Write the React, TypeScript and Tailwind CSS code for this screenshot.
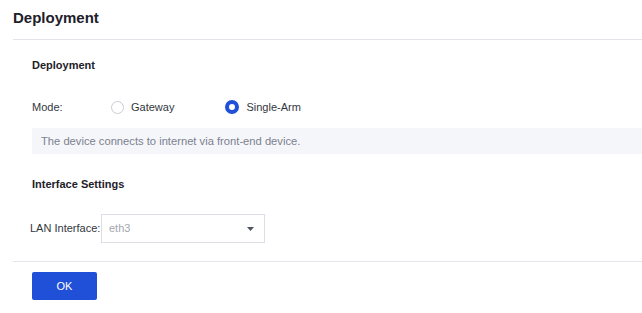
export default function App() {
  return (
    <div className="w-[642px] h-[313px] overflow-hidden bg-white font-['Liberation_Sans',Arial,sans-serif] text-[11px] text-[#333740]">
      <div className="ml-[13px] h-[40px] pb-[4px] border-b border-[#e3e5ea] flex items-center">
        <h1 className="text-[15px] font-bold text-[#1d2129] leading-none">Deployment</h1>
      </div>

      <div className="pl-[32px]">
        <h2 className="mt-[17px] h-[16px] leading-[16px] font-bold text-[#1d2129]">Deployment</h2>

        <div className="mt-[23px] h-[22px] flex items-center">
          <span className="w-[79px]">Mode:</span>
          <label className="flex items-center">
            <span className="w-[13px] h-[13px] rounded-full border border-[#c8ccd4] bg-white" />
            <span className="ml-[7px]">Gateway</span>
          </label>
          <label className="flex items-center ml-[51px]">
            <span className="w-[14px] h-[14px] rounded-full border-[4px] border-[#2150d8] bg-white" />
            <span className="ml-[7px]">Single-Arm</span>
          </label>
        </div>

        <div className="mt-[10px] h-[26px] pl-[9px] flex items-center bg-[#f5f6fa] text-[#7b818e] text-[11.2px]">
          The device connects to internet via front-end device.
        </div>

        <h2 className="mt-[22px] h-[16px] leading-[16px] font-bold text-[#1d2129]">Interface Settings</h2>
      </div>

      <div className="mt-[22px] pl-[30px] flex items-center">
        <span className="w-[71px]">LAN Interface:</span>
        <div className="w-[164px] h-[29px] border border-[#dcdfe5] pl-[7px] pr-[10px] flex items-center justify-between">
          <span className="text-[#a3a7ae]">eth3</span>
          <svg width="7" height="4" viewBox="0 0 7 4">
            <path d="M0 0H7L3.5 4Z" fill="#4e5460" />
          </svg>
        </div>
      </div>

      <div className="ml-[13px] mt-[18px] border-t border-[#e3e5ea]" />

      <div className="pl-[32px] mt-[10px]">
        <button className="w-[65px] h-[28px] rounded-[2px] bg-[#2150d8] text-white text-[11px] leading-none">
          OK
        </button>
      </div>
    </div>
  );
}
